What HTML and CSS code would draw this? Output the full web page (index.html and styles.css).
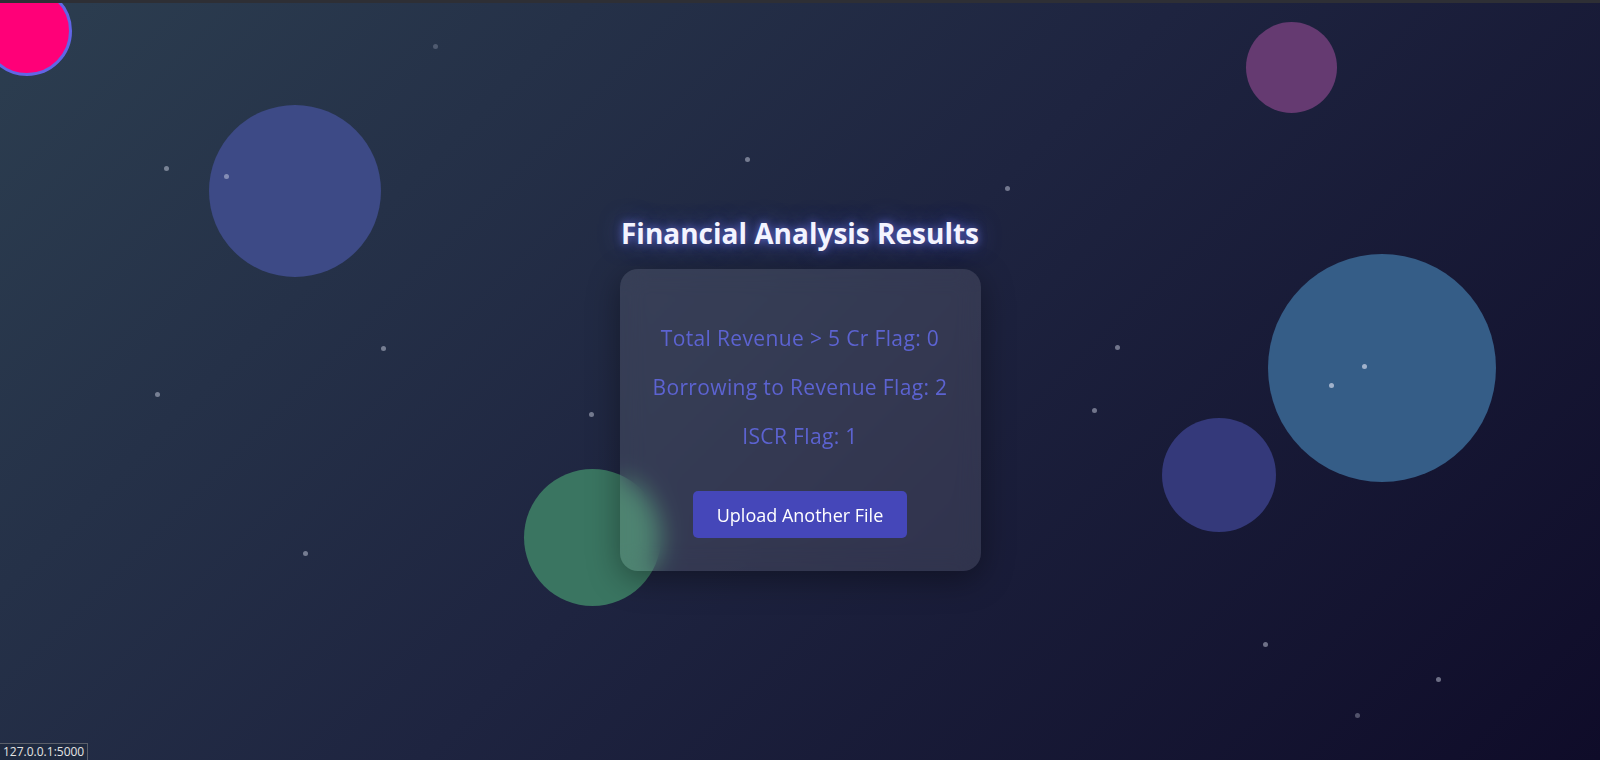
FILE: index.html
```html
<!DOCTYPE html>
<html lang="en">
<head>
<meta charset="utf-8">
<title>Financial Analysis Results</title>
<link rel="stylesheet" href="styles.css">
</head>
<body>
<div class="topbar"></div>
<div class="bg">
  <span class="blob blob-pink"></span>
  <span class="blob blob-blue"></span>
  <span class="blob blob-purple"></span>
  <span class="blob blob-sky"></span>
  <span class="blob blob-indigo"></span>
  <span class="blob blob-green"></span>
  <span class="dot d1"></span><span class="dot d2"></span><span class="dot d3"></span><span class="dot d4"></span>
  <span class="dot d5"></span><span class="dot d6"></span><span class="dot d7"></span><span class="dot d8"></span>
  <span class="dot d9"></span><span class="dot d10"></span><span class="dot d11"></span><span class="dot d12"></span>
  <span class="dot d13"></span><span class="dot d14"></span><span class="dot d15"></span><span class="dot d16"></span>
</div>
<main class="page">
  <h1 class="title">Financial Analysis Results</h1>
  <section class="card">
    <p class="flag">Total Revenue &gt; 5 Cr Flag: 0</p>
    <p class="flag">Borrowing to Revenue Flag: 2</p>
    <p class="flag">ISCR Flag: 1</p>
    <button class="btn">Upload Another File</button>
  </section>
</main>
<div class="status">127.0.0.1:5000</div>
</body>
</html>
```
FILE: styles.css
```css
* { box-sizing: border-box; }
html, body { margin: 0; padding: 0; }
body {
  width: 1600px;
  height: 760px;
  overflow: hidden;
  background: linear-gradient(135deg, #2c3e50 0%, #1e2440 50%, #0f0c29 100%);
  font-family: "Open Sans", "Noto Sans", sans-serif;
  position: relative;
}
.topbar {
  position: relative;
  z-index: 5;
  height: 3px;
  background: #2e2f35;
}
.bg { position: absolute; inset: 0; z-index: 0; }
.blob { position: absolute; border-radius: 50%; display: block; }
.blob-pink { left: -18px; top: -14px; width: 90px; height: 90px; background: #ff0078; border: 3px solid #6166e6; }
.blob-blue { left: 209px; top: 105px; width: 172px; height: 172px; background: #3d4a86; }
.blob-purple { left: 1246px; top: 22px; width: 91px; height: 91px; background: #653a71; }
.blob-sky { left: 1268px; top: 254px; width: 228px; height: 228px; background: #355d87; }
.blob-indigo { left: 1162px; top: 418px; width: 114px; height: 114px; background: #34397a; }
.blob-green { left: 524px; top: 469px; width: 137px; height: 137px; background: #3a7561; }
.dot { position: absolute; width: 5px; height: 5px; border-radius: 50%; background: rgba(220, 225, 240, 0.45); display: block; }
.d1 { left: 433px; top: 44px; opacity: 0.5; }
.d2 { left: 164px; top: 166px; }
.d3 { left: 224px; top: 174px; }
.d4 { left: 745px; top: 157px; }
.d5 { left: 1005px; top: 186px; }
.d6 { left: 381px; top: 346px; }
.d7 { left: 155px; top: 392px; }
.d8 { left: 589px; top: 412px; }
.d9 { left: 1115px; top: 345px; }
.d10 { left: 1092px; top: 408px; }
.d11 { left: 1362px; top: 364px; background: rgba(220, 225, 240, 0.65); }
.d12 { left: 1329px; top: 383px; background: rgba(220, 225, 240, 0.65); }
.d13 { left: 303px; top: 551px; }
.d14 { left: 1263px; top: 642px; }
.d15 { left: 1436px; top: 677px; }
.d16 { left: 1355px; top: 713px; opacity: 0.7; }

.page {
  position: relative;
  z-index: 2;
  display: flex;
  flex-direction: column;
  align-items: center;
  padding-top: 210px;
}
.title {
  margin: 0 0 16px;
  font-family: "Open Sans", sans-serif;
  font-weight: 700;
  font-size: 28px;
  line-height: 40px;
  color: #f4f4ff;
  text-shadow: 0 0 8px rgba(120, 130, 255, 0.7), 0 0 22px rgba(100, 110, 255, 0.5);
}
.card {
  display: block;
  width: 361px;
  padding: 35px 20px 33px;
  border-radius: 18px;
  background: rgba(255, 255, 255, 0.1);
  backdrop-filter: blur(12px);
  box-shadow: 0 8px 32px rgba(0, 0, 0, 0.37);
  text-align: center;
}
.flag {
  margin: 19px 0;
  font-family: "Open Sans", sans-serif;
  font-size: 21px;
  letter-spacing: 0.35px;
  line-height: 30px;
  color: #5c63d1;
}
.btn {
  display: block;
  margin: 40px auto 0;
  width: 214px;
  height: 47px;
  border: 0;
  border-radius: 5px;
  background: #4547b9;
  color: #ffffff;
  font-family: "Open Sans", sans-serif;
  font-size: 18px;
}
.status {
  position: fixed;
  left: 0;
  bottom: 0;
  z-index: 6;
  padding: 0 3px;
  height: 17px;
  line-height: 15px;
  font-family: "Open Sans", sans-serif;
  font-size: 12px;
  color: #e4e4e4;
  background: #1f2a40;
  border: 1px solid #5a5f6a;
  border-left: 0;
  border-bottom: 0;
}
```
